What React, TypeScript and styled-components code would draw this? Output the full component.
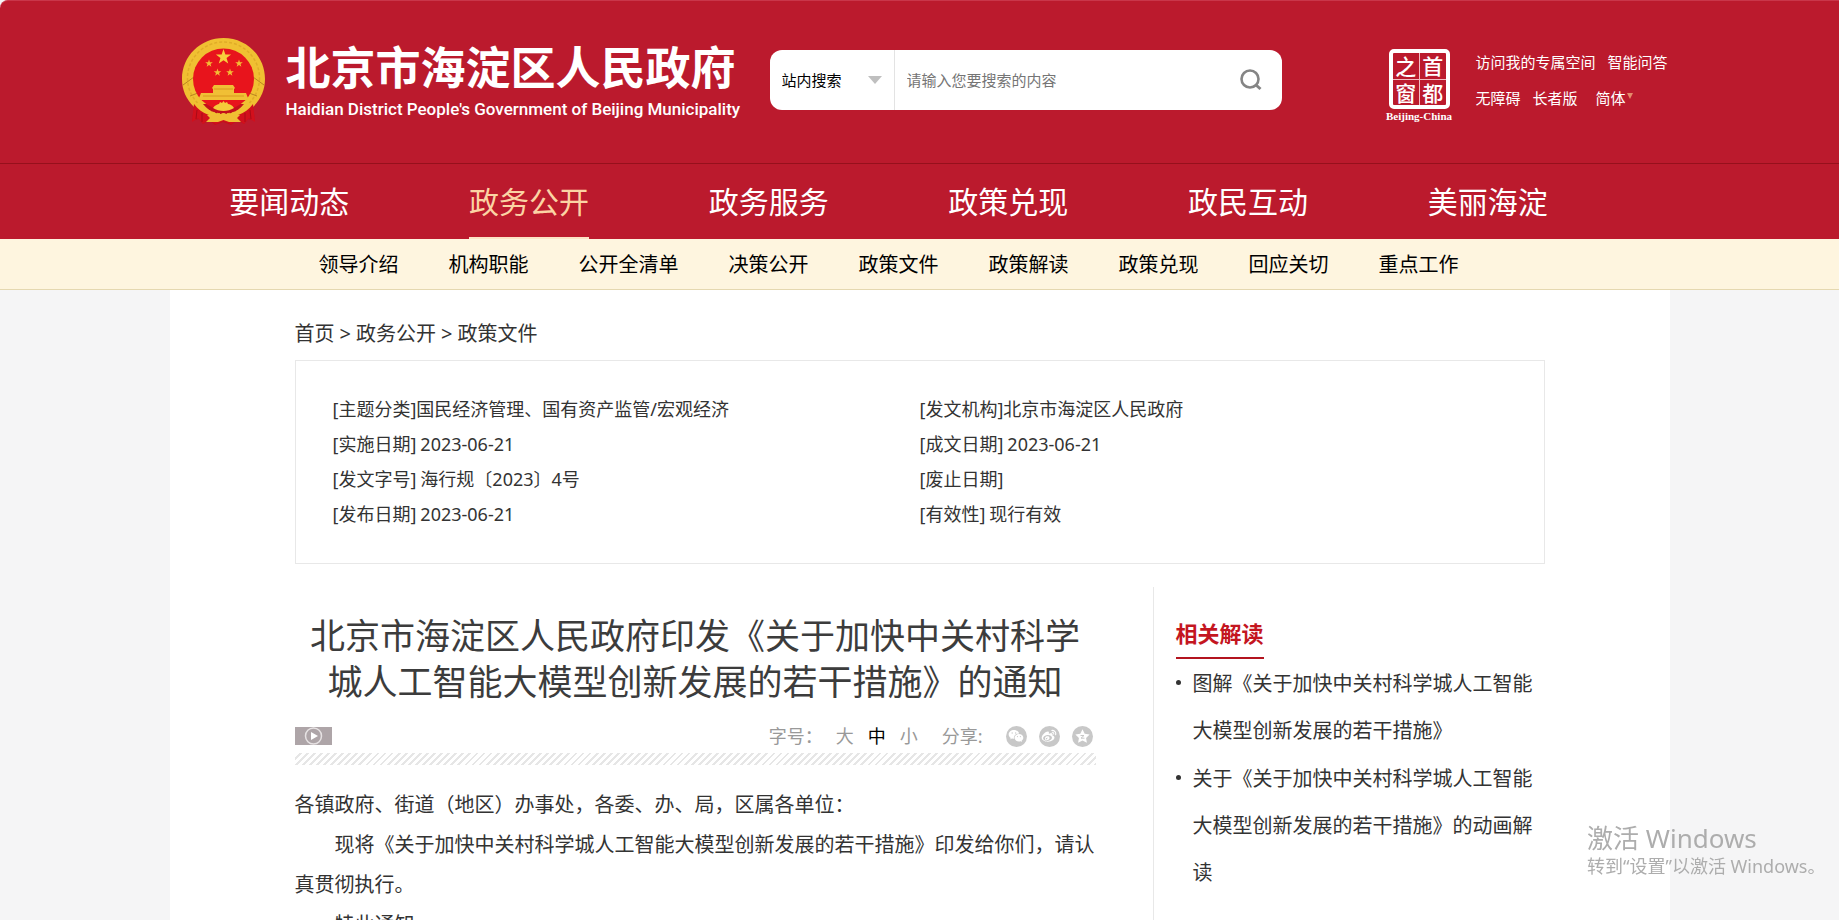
import React, { useState } from "react";
import styled, { createGlobalStyle } from "styled-components";
import { RiWechatFill, RiWeiboFill } from "react-icons/ri";

const GlobalStyle = createGlobalStyle`
  *, *::before, *::after { box-sizing: border-box; }
  html { background: #fff; overflow: hidden; }
  body {
    margin: 0;
    font-family: "Noto Sans", "Noto Sans CJK SC", sans-serif;
    color: #333;
    height: 100vh;
    overflow: hidden;
  }
  a { color: inherit; text-decoration: none; }
  button, input, select { font-family: inherit; }
`;

const red = "#bb1a2d";

const Page = styled.div`
  margin-right: 4px;
  background: #f5f5f6;
`;

const Container = styled.div`
  width: 100%;
  max-width: 1500px;
  margin: 0 auto;
`;

const Header = styled.header`
  background: ${red};
  border-top: 1px solid #c9364a;
  border-top-left-radius: 8px;
`;

const HeaderRow = styled(Container)`
  display: flex;
  align-items: center;
  height: 162px;
  padding: 0 0 4px 12px;
`;

const Brand = styled.a`
  display: flex;
  align-items: center;
  gap: 21px;
  margin-right: 34px;
  color: #fff;

  svg { margin-top: 4px; }
`;

const BrandText = styled.div`
  display: flex;
  flex-direction: column;
  gap: 6px;
  width: 450px;
  margin-top: 3px;
`;

const BrandName = styled.h1`
  margin: 0;
  font: 700 45px/48px "Noto Sans CJK SC", sans-serif;
  white-space: nowrap;
`;

const BrandSub = styled.span`
  font: 500 17px/26px Roboto, "Liberation Sans", sans-serif;
  white-space: nowrap;
`;

const Search = styled.form`
  display: flex;
  flex: 0 1 512px;
  height: 60px;
  border-radius: 12px;
  background: #fff;
  overflow: hidden;
`;

const ScopeBox = styled.div`
  position: relative;
  flex: 0 0 125px;
  border-right: 1px solid #e3e3e3;

  svg {
    position: absolute;
    right: 12px;
    top: 26px;
    pointer-events: none;
  }
`;

const Scope = styled.select`
  width: 100%;
  height: 100%;
  padding: 0 12px;
  border: 0;
  background: transparent;
  appearance: none;
  color: #000;
  font-size: 15px;
`;

const Keyword = styled.input`
  flex: 1;
  min-width: 0;
  padding: 0 12px;
  border: 0;
  outline: 0;
  font-size: 15px;

  &::placeholder { color: #757575; }
`;

const SearchButton = styled.button`
  display: flex;
  align-items: center;
  padding: 0 20px;
  border: 0;
  background: none;
  cursor: pointer;
`;

const Tools = styled.div`
  display: flex;
  align-items: center;
  gap: 23px;
  margin-left: auto;
`;

const Seal = styled.a`
  display: flex;
  flex-direction: column;
  align-items: center;
  width: 67px;
  margin-top: 11px;
  color: #fff;
`;

const SealFace = styled.span`
  display: grid;
  grid-template-columns: 1fr 1fr;
  grid-template-rows: 1fr 1fr;
  width: 61px;
  height: 60px;
  border: 4px solid #fff;
  border-radius: 5px;
  text-align: center;
  font: 500 21px/25px "Noto Sans CJK SC", sans-serif;
`;

const SealCell = styled.span<{ $right?: boolean; $bottom?: boolean }>`
  border-left: ${(p) => (p.$right ? "1px solid #f3bcc2" : "0")};
  border-top: ${(p) => (p.$bottom ? "1px solid #f3bcc2" : "0")};
`;

const SealCaption = styled.span`
  font: 700 11px/14px "Liberation Serif", serif;
  white-space: nowrap;
`;

const ToolLinks = styled.div`
  width: 194px;
  color: #fff;
  font-size: 15px;
  line-height: 36px;
`;

const ToolLine = styled.div`
  display: flex;
  gap: 12px;
  white-space: nowrap;
`;

const Language = styled.button`
  display: flex;
  align-items: center;
  gap: 1px;
  padding: 0;
  margin-left: 6px;
  border: 0;
  background: none;
  color: #fff;
  font-size: 15px;
  line-height: 36px;
`;

const MainNav = styled.nav`
  background: ${red};
  border-top: 1px solid #96101c;
`;

const NavList = styled(Container)`
  display: flex;
  padding-right: 62px;
`;

const NavItem = styled.div`
  flex: 1;
  display: flex;
  justify-content: center;
`;

const NavLink = styled.a<{ $active?: boolean }>`
  height: 75px;
  padding-bottom: 2px;
  border-bottom: 2px solid ${(p) => (p.$active ? "#fde3c5" : "transparent")};
  color: ${(p) => (p.$active ? "#fbd3a4" : "#fff")};
  font-size: 30px;
  line-height: 76px;
  white-space: nowrap;
`;

const SubNav = styled.nav`
  background: #fef5df;
  border-bottom: 1px solid #e5d8b0;
`;

const SubList = styled(Container)`
  display: flex;
  gap: 50px;
  padding: 2px 149px 0;
  color: #000;
  font-size: 20px;
  line-height: 48px;
  white-space: nowrap;
`;

const Main = styled(Container)`
  min-height: 640px;
  padding: 20px 125px 0;
  background: #fff;
`;

const Crumbs = styled.nav`
  display: flex;
  gap: 5px;
  padding-bottom: 2px;
  font-size: 20px;
  line-height: 48px;
`;

const Meta = styled.dl`
  display: grid;
  grid-template-columns: 587px 1fr;
  margin: 0;
  padding: 31px 37px;
  border: 1px solid #e8e8e8;
  font-size: 18px;
  line-height: 35px;
`;

const MetaRow = styled.div<{ $tight?: boolean }>`
  display: flex;
  gap: ${(p) => (p.$tight ? "0" : "4px")};

  dt, dd { margin: 0; }
`;

const Columns = styled.div`
  display: flex;
  justify-content: space-between;
  padding-top: 23px;
`;

const Article = styled.article`
  flex: 0 1 801px;
  padding-top: 26px;
`;

const Title = styled.h2`
  margin: 0;
  font-weight: 400;
  font-size: 35px;
  line-height: 46px;
  text-align: center;
  color: #3c3c3c;
`;

const ArticleBar = styled.div`
  display: flex;
  align-items: center;
  height: 48px;
  padding-top: 14px;
  color: #999;
  font-size: 18px;
  line-height: 34px;
`;

const Listen = styled.button`
  display: flex;
  margin-right: auto;
  padding: 0;
  border: 0;
  background: none;
`;

const SizeGroup = styled.div`
  display: flex;
  gap: 14px;
  margin: 0 24px 0 13px;
`;

const SizeButton = styled.button<{ $on?: boolean }>`
  padding: 0;
  border: 0;
  background: none;
  color: ${(p) => (p.$on ? "#000" : "#999")};
  font-size: 18px;
  line-height: 34px;
`;

const Share = styled.div`
  display: flex;
  gap: 12px;
  margin: 0 3px 0 23px;
`;

const ShareLink = styled.a`
  display: flex;
  align-items: center;
  justify-content: center;
  width: 21px;
  height: 21px;
  border-radius: 50%;
  background: #c8c8c8;
  color: #fff;
`;

const Hatch = styled.div`
  height: 12px;
  background: repeating-linear-gradient(135deg, #fff 0 3px, #e6e6e6 3px 5px);
`;

const Body = styled.div`
  padding-top: 20px;
  font-size: 20px;
  line-height: 40px;
`;

const Para = styled.p<{ $indent?: boolean }>`
  margin: 0;
  text-indent: ${(p) => (p.$indent ? "2em" : "0")};
`;

const Aside = styled.aside`
  flex: 0 0 392px;
  padding: 22px 0 0 22px;
  border-left: 1px solid #e8e8e8;
`;

const AsideTitle = styled.h3`
  width: max-content;
  margin: 0 0 1px;
  border-bottom: 2px solid #b3141f;
  color: #c4161f;
  font-size: 22px;
  line-height: 48px;
`;

const AsideList = styled.ul`
  margin: 0;
  padding: 0;
  list-style: none;
  font-size: 20px;
  line-height: 47px;
`;

const AsideItem = styled.li`
  display: flex;
  gap: 12px;
  margin-bottom: 1px;

  &::before {
    content: "";
    flex: none;
    width: 5px;
    height: 5px;
    margin-top: 20px;
    border-radius: 50%;
    background: #333;
  }
`;

const Watermark = styled.div`
  position: fixed;
  right: 25px;
  bottom: 40px;
  width: 231px;
  color: #adadad;
  font-size: 18px;
  line-height: 28px;
  white-space: nowrap;
  pointer-events: none;

  strong {
    display: block;
    font-weight: 400;
    font-size: 26px;
  }
`;

const starPoints = (cx: number, cy: number, r: number, inner = 0.4) =>
  Array.from({ length: 10 }, (_, i) => {
    const a = -Math.PI / 2 + (i * Math.PI) / 5;
    const q = i % 2 ? r * inner : r;
    return `${(cx + q * Math.cos(a)).toFixed(2)},${(cy + q * Math.sin(a)).toFixed(2)}`;
  }).join(" ");

const Emblem = () => (
  <svg width="83" height="88" viewBox="0 0 83 88" aria-hidden="true">
    <path d="M13 62 L10 83 L17 81 L21 86 L27 82 L33 87 L41 84 L49 87 L56 82 L62 86 L66 81 L73 83 L70 62Z" fill="#c3101c" />
    <path d="M14 70l1 10M19 72l1 10M64 72l-1 10M69 70l-1 10" stroke="#e8303a" strokeWidth="2" />
    <path d="M41.500 0C64.500 0 83 18 83 41C83 52 79 61 71 69L62 66H21L12 69C4 61 0 52 0 41C0 18 18.500 0 41.500 0Z" fill="#f0c032" />
    <circle cx="41.500" cy="40" r="36" fill="none" stroke="#e0ac28" strokeWidth="1.500" strokeDasharray="3 2" />
    <path d="M1 47L12 39M82 47L71 39M8 58l8-3M75 58l-8-3" stroke="#b98320" />
    <circle cx="41.500" cy="41" r="30.500" fill="#e8141c" />
    <polygon points={starPoints(41.5, 19, 8)} fill="#f8cf3c" />
    <polygon points={starPoints(27, 25.5, 4)} fill="#f3bd35" />
    <polygon points={starPoints(57, 25.5, 4)} fill="#f3bd35" />
    <polygon points={starPoints(35.5, 34.5, 4)} fill="#f3bd35" />
    <polygon points={starPoints(48, 34.5, 4)} fill="#f3bd35" />
    <path d="M32 47H51L53 50L52 51V55H64L66 60L64 62H19L17 60L19 55H31V51L30 50Z" fill="#f0bf35" />
    <path d="M32 51H51M21 58H62" stroke="#d8981f" />
    <path d="M18 62C26 74 34 76 41.500 76C49 76 57 74 65 62L71 69C61 78 52 80 41.500 80C31 80 22 78 12 69Z" fill="#f0c032" />
    <path d="M31 70C33 67 36 66 37 66L38 64L40 65L41.500 63L43 65L45 64L46 66C48 66 50 67 52 70C46 74 37 74 31 70Z" fill="#f5cb3a" />
    <path d="M12 66C20 77 32 79 41.500 79C51 79 63 77 71 66L73 84L67 80L62 86L57 82L49 86L41.500 83L34 86L26 82L21 86L16 80L10 84Z" fill="#d2101c" />
    <path d="M15 72l-1 9M20 75v9M63 75v9M68 72l1 9" stroke="#a80b17" />
    <path d="M25 77H35L41.500 75L48 77H58L55 80L59 84H47L41.500 82L36 84H24L28 80Z" fill="#f0bd34" />
  </svg>
);

const QzoneStar = () => (
  <svg width="15" height="15" viewBox="0 0 15 15" aria-hidden="true">
    <polygon points={starPoints(7.5, 7.8, 7.5, 0.5)} fill="#fff" />
    <path d="M5.500 6.500H9L6 9.200H9.500" fill="none" stroke="#c8c8c8" />
  </svg>
);

const mainNav = ["要闻动态", "政务公开", "政务服务", "政策兑现", "政民互动", "美丽海淀"];
const subNav = ["领导介绍", "机构职能", "公开全清单", "决策公开", "政策文件", "政策解读", "政策兑现", "回应关切", "重点工作"];
const meta: [string, string, boolean?][] = [
  ["[主题分类]", "国民经济管理、国有资产监管/宏观经济", true],
  ["[发文机构]", "北京市海淀区人民政府", true],
  ["[实施日期]", "2023-06-21"],
  ["[成文日期]", "2023-06-21"],
  ["[发文字号]", "海行规〔2023〕4号"],
  ["[废止日期]", ""],
  ["[发布日期]", "2023-06-21"],
  ["[有效性]", "现行有效"],
];
const related = [
  "图解《关于加快中关村科学城人工智能大模型创新发展的若干措施》",
  "关于《关于加快中关村科学城人工智能大模型创新发展的若干措施》的动画解读",
];

export default function App() {
  const [size, setSize] = useState("中");
  return (
    <>
      <GlobalStyle />
      <Page>
        <Header>
          <HeaderRow>
            <Brand href="#">
              <Emblem />
              <BrandText>
                <BrandName>北京市海淀区人民政府</BrandName>
                <BrandSub>Haidian District People's Government of Beijing Municipality</BrandSub>
              </BrandText>
            </Brand>
            <Search role="search" onSubmit={(e) => e.preventDefault()}>
              <ScopeBox>
                <Scope aria-label="搜索范围">
                  <option>站内搜索</option>
                </Scope>
                <svg width="14" height="8" viewBox="0 0 14 8" aria-hidden="true">
                  <path d="M0 0H14L7 8Z" fill="#bfbfbf" />
                </svg>
              </ScopeBox>
              <Keyword type="text" aria-label="搜索内容" placeholder="请输入您要搜索的内容" />
              <SearchButton type="submit" aria-label="搜索">
                <svg width="22" height="22" viewBox="0 0 22 22" fill="none" stroke="#858585" aria-hidden="true">
                  <circle cx="10" cy="10" r="8.500" strokeWidth="2.600" />
                  <path d="M16 16L20.500 20" strokeWidth="3" />
                </svg>
              </SearchButton>
            </Search>
            <Tools>
              <Seal href="#">
                <SealFace>
                  <SealCell>之</SealCell>
                  <SealCell $right>首</SealCell>
                  <SealCell $bottom>窗</SealCell>
                  <SealCell $right $bottom>都</SealCell>
                </SealFace>
                <SealCaption>Beijing-China</SealCaption>
              </Seal>
              <ToolLinks>
                <ToolLine>
                  <a href="#">访问我的专属空间</a>
                  <a href="#">智能问答</a>
                </ToolLine>
                <ToolLine>
                  <a href="#">无障碍</a>
                  <a href="#">长者版</a>
                  <Language type="button">
                    简体
                    <svg width="6" height="12" viewBox="0 0 6 12" aria-hidden="true">
                      <path d="M0 1H6L3 7Z" fill="#e58a6a" />
                    </svg>
                  </Language>
                </ToolLine>
              </ToolLinks>
            </Tools>
          </HeaderRow>
        </Header>

        <MainNav>
          <NavList>
            {mainNav.map((t) => (
              <NavItem key={t}>
                <NavLink href="#" $active={t === "政务公开"}>{t}</NavLink>
              </NavItem>
            ))}
          </NavList>
        </MainNav>
        <SubNav>
          <SubList>
            {subNav.map((t) => (
              <a href="#" key={t}>{t}</a>
            ))}
          </SubList>
        </SubNav>

        <Main as="main">
          <Crumbs>
            <a href="#">首页</a>
            <span>&gt;</span>
            <a href="#">政务公开</a>
            <span>&gt;</span>
            <a href="#">政策文件</a>
          </Crumbs>
          <Meta>
            {meta.map(([k, v, tight]) => (
              <MetaRow key={k} $tight={tight}>
                <dt>{k}</dt>
                <dd>{v}</dd>
              </MetaRow>
            ))}
          </Meta>
          <Columns>
            <Article>
              <Title>北京市海淀区人民政府印发《关于加快中关村科学城人工智能大模型创新发展的若干措施》的通知</Title>
              <ArticleBar>
                <Listen type="button" aria-label="播放">
                  <svg width="37" height="18" viewBox="0 0 37 18" aria-hidden="true">
                    <rect width="37" height="18" fill="#aea5a8" />
                    <circle cx="18.500" cy="9" r="8" fill="none" stroke="#e6e2e3" strokeWidth="1.500" />
                    <path d="M16 5L23 9L16 13Z" fill="#fff" />
                  </svg>
                </Listen>
                <span>字号：</span>
                <SizeGroup>
                  {["大", "中", "小"].map((s) => (
                    <SizeButton key={s} type="button" $on={s === size} onClick={() => setSize(s)}>{s}</SizeButton>
                  ))}
                </SizeGroup>
                <span>分享:</span>
                <Share>
                  <ShareLink href="#" aria-label="微信"><RiWechatFill size={16} /></ShareLink>
                  <ShareLink href="#" aria-label="微博"><RiWeiboFill size={16} /></ShareLink>
                  <ShareLink href="#" aria-label="QQ空间"><QzoneStar /></ShareLink>
                </Share>
              </ArticleBar>
              <Hatch />
              <Body>
                <Para>各镇政府、街道（地区）办事处，各委、办、局，区属各单位：</Para>
                <Para $indent>现将《关于加快中关村科学城人工智能大模型创新发展的若干措施》印发给你们，请认真贯彻执行。</Para>
                <Para $indent>特此通知。</Para>
              </Body>
            </Article>
            <Aside>
              <AsideTitle>相关解读</AsideTitle>
              <AsideList>
                {related.map((t) => (
                  <AsideItem key={t}><a href="#">{t}</a></AsideItem>
                ))}
              </AsideList>
            </Aside>
          </Columns>
        </Main>
      </Page>
      <Watermark>
        <strong>激活 Windows</strong>
        转到“设置”以激活 Windows。
      </Watermark>
    </>
  );
}
